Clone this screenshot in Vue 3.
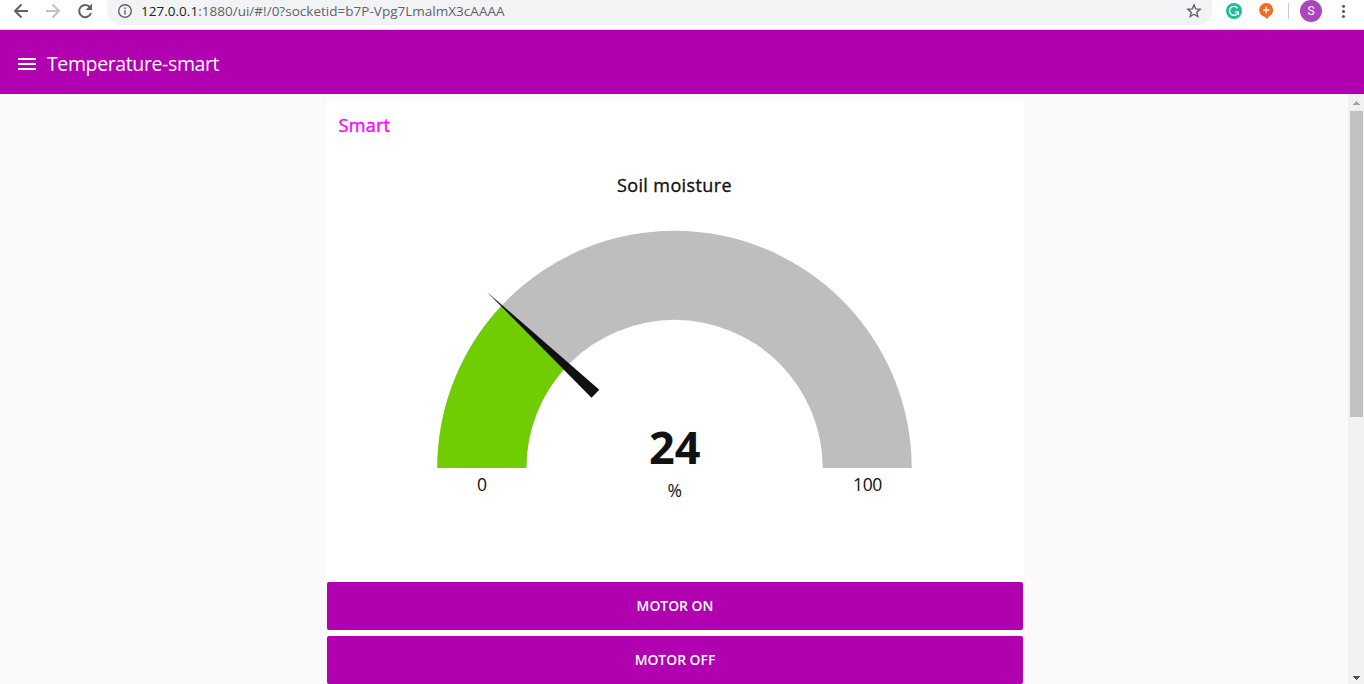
<script setup>
const buttons = ['MOTOR ON', 'MOTOR OFF']
const gauge = { min: 0, max: 100, value: 24, unit: '%' }

const cx = 348.5
const cy = 368
const outer = 237.2
const inner = 148.2

// Ring segment between two fractions of the half circle, left to right.
function segment(from, to) {
  const point = (radius, f) => {
    const a = Math.PI * (1 - f)
    return `${(cx + radius * Math.cos(a)).toFixed(2)} ${(cy - radius * Math.sin(a)).toFixed(2)}`
  }
  return `M${point(outer, from)}A${outer} ${outer} 0 0 1 ${point(outer, to)}L${point(inner, to)}A${inner} ${inner} 0 0 0 ${point(inner, from)}Z`
}

const track = segment(0, 1)
const level = segment(0, (gauge.value - gauge.min) / (gauge.max - gauge.min))
</script>

<template>
  <div class="window">
    <div class="toolbar">
      <svg class="nav-icons" width="107" height="29" viewBox="0 0 107 29" fill="none">
        <path d="M28 11H15.5M21.5 4.5L15 11l6.500 6.500" stroke="#5f6368" stroke-width="2" />
        <path d="M46 11h12.500M52.500 4.500L59 11l-6.500 6.500" stroke="#bdc1c6" stroke-width="2" />
        <path d="M90 7.200A6.100 6.100 0 1 0 91 13" stroke="#5f6368" stroke-width="2" />
        <path d="M92 3.500V10h-6.500z" fill="#5f6368" />
      </svg>
      <div class="address">
        <svg class="info" width="16" height="16" viewBox="0 0 16 16">
          <circle cx="8" cy="8" r="6.300" fill="none" stroke="#5f6368" stroke-width="1.400" />
          <path d="M7.250 7.200h1.500v4.300h-1.500zM7.250 4.500h1.500V6h-1.500z" fill="#5f6368" />
        </svg>
        <span class="url"><span class="host">127.0.0.1</span>:1880/ui/#!/0?socketid=b7P-Vpg7LmalmX3cAAAA</span>
        <svg class="star" width="16" height="16" viewBox="0 0 16 16">
          <path d="M8 1.900l1.750 4.050 4.400.38-3.330 2.900 1 4.300L8 11.250l-3.820 2.280 1-4.300-3.330-2.900 4.400-.38z" fill="none" stroke="#5f6368" stroke-width="1.400" />
        </svg>
      </div>
      <svg class="extensions" width="152" height="29" viewBox="1212 0 152 29">
        <circle cx="1234" cy="11" r="8" fill="#15c39a" />
        <path d="M1237.500 8.300a4.400 4.400 0 1 0 .7 3.400h-3.400M1238.300 11.200v3.500" fill="none" stroke="#fff" stroke-width="1.400" />
        <path d="M1266 3a7 7 0 0 1 2.800 13.400L1267 19l-2-2.100A7 7 0 0 1 1266 3z" fill="#f26b21" />
        <path d="M1266.200 6.800v6.400M1263 10h6.400" stroke="#fff" stroke-width="1.400" />
        <path d="M1288.500 3v16" stroke="#c8cacd" />
        <circle cx="1311" cy="11" r="11" fill="#ab47bc" />
        <text x="1311" y="15.300" class="initial">S</text>
        <circle cx="1343.500" cy="6.300" r="1.600" fill="#5f6368" />
        <circle cx="1343.500" cy="11.400" r="1.600" fill="#5f6368" />
        <circle cx="1343.500" cy="16.500" r="1.600" fill="#5f6368" />
      </svg>
    </div>

    <header class="header">
      <svg width="18" height="12" viewBox="0 0 18 12">
        <path d="M0 0h18v2H0zM0 5h18v2H0zM0 10h18v2H0z" fill="#fff" />
      </svg>
      <h1 class="title">Temperature-smart</h1>
    </header>

    <div class="content">
      <main class="main">
        <section class="card">
          <svg class="gauge" width="698" height="482" viewBox="0 0 698 482">
            <text x="12.500" y="32" class="group" textLength="51.500">Smart</text>
            <text x="291" y="92" class="caption" textLength="114.500">Soil moisture</text>
            <path :d="track" fill="#bebebe" />
            <path :d="level" fill="#6fcd02" />
            <path d="M161 192L273.300 289.700 265.500 297.700z" fill="#111" />
            <text x="323" y="364" class="value" textLength="51.500">{{ gauge.value }}</text>
            <text x="348.500" y="397" class="small">{{ gauge.unit }}</text>
            <text x="155.800" y="391" class="small">{{ gauge.min }}</text>
            <text x="541.500" y="391" class="small">{{ gauge.max }}</text>
          </svg>
          <div class="buttons">
            <button v-for="label in buttons" :key="label" class="button">{{ label }}</button>
          </div>
        </section>
      </main>
      <div class="scrollbar">
        <svg width="16" height="17" viewBox="0 0 16 17">
          <path d="M8 7h1v1h1v1h1v1h1v1H5v-1h1V9h1V8h1z" fill="#a3a3a3" />
        </svg>
        <div class="thumb"></div>
        <svg class="down" width="16" height="17" viewBox="0 0 16 17">
          <path d="M5 9h7v1h-1v1h-1v1H9v1H8v-1H7v-1H6v-1H5z" fill="#505050" />
        </svg>
      </div>
    </div>
  </div>
</template>

<style>
html,
body {
  margin: 0;
  overflow: hidden;
}
</style>

<style scoped>
.window {
  display: flex;
  flex-direction: column;
  width: 1364px;
  height: 684px;
  overflow: hidden;
  background: #fafafa;
  font-family: "Open Sans", "Noto Sans", sans-serif;
}
.toolbar {
  display: flex;
  flex: none;
  height: 29px;
  background: #fff;
  border-bottom: 1px solid #dadce0;
}
.address {
  display: flex;
  align-items: center;
  box-sizing: border-box;
  width: 1105px;
  height: 25px;
  padding: 0 10px;
  background: #f1f3f4;
  border-radius: 0 0 14px 14px / 0 0 14px 14px;
}
.info,
.star {
  margin-bottom: 3px;
}
.url {
  margin: 0 auto 4px 8px;
  font-size: 13.500px;
  letter-spacing: 0.02px;
  line-height: 20px;
  color: #5f6368;
  white-space: nowrap;
}
.host {
  color: #202124;
}
.initial {
  fill: #fff;
  font: 12px Roboto, sans-serif;
  text-anchor: middle;
}
.header {
  display: flex;
  flex: none;
  align-items: center;
  gap: 11px;
  box-sizing: border-box;
  height: 64px;
  padding: 4px 18px 0;
  background: #b000b0;
  color: #fff;
}
.title {
  margin: 0 0 1px;
  font-size: 19.500px;
  font-weight: 400;
  letter-spacing: -0.38px;
  line-height: 28px;
}
.content {
  display: flex;
  flex: 1;
  min-height: 0;
}
.main {
  display: flex;
  flex: 1;
  justify-content: center;
  padding: 6px 0 0 2px;
}
.card {
  width: 698px;
  background: #fff;
}
.gauge {
  display: block;
}
.group {
  fill: #f0f;
  stroke: #f0f;
  stroke-width: 0.35px;
  font-size: 18px;
}
.caption {
  fill: #111;
  stroke: #111;
  stroke-width: 0.35px;
  font-size: 18px;
}
.value {
  fill: #111;
  font-size: 45px;
  font-weight: 700;
}
.small {
  fill: #111;
  font-size: 17.500px;
  letter-spacing: -0.3px;
  text-anchor: middle;
}
.buttons {
  display: flex;
  flex-direction: column;
  gap: 6px;
  padding: 0 1px;
}
.button {
  height: 48px;
  padding: 0;
  border: 0;
  border-radius: 2px;
  background: #b000b0;
  color: #fff;
  font: 600 13.900px/48px "Open Sans", "Noto Sans", sans-serif;
}
.scrollbar {
  display: flex;
  flex: none;
  flex-direction: column;
  width: 16px;
  background: #f1f1f1;
}
.thumb {
  width: 13px;
  height: 306px;
  margin-left: 2px;
  background: #c1c1c1;
}
.down {
  margin-top: auto;
}
</style>
